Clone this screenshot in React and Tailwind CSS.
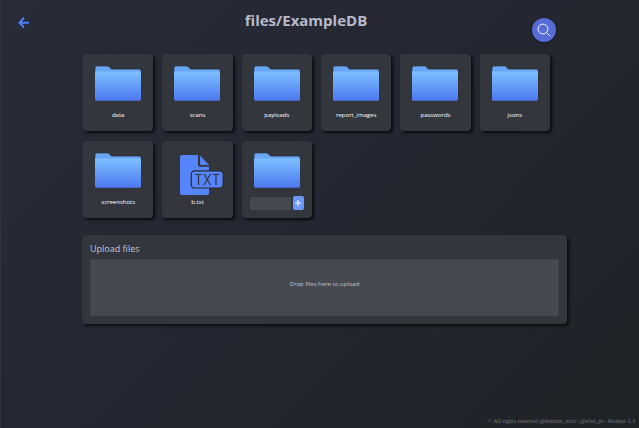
const FOLDERS = ["data", "scans", "payloads", "report_images", "passwords", "jsons", "screenshots"];

function FolderIcon() {
  return (
    <svg viewBox="0 0 46 36" className="h-9 w-[46px]" aria-hidden>
      <defs>
        <linearGradient id="folder-front" x1="0" y1="0" x2="0" y2="1">
          <stop offset="0" stopColor="#7cc0ff" />
          <stop offset="1" stopColor="#4d78f0" />
        </linearGradient>
      </defs>
      <path d="M0 34V2C0 .8.800 0 2 0H12c1.200 0 1.800.300 2.500 1L16.500 3h27.800c1 0 1.700.700 1.700 1.700v5H0z" fill="#68a5f5" stroke="#211d1a" strokeWidth=".6" />
      <path d="M0 5.500h46v27.500c0 1.200-.8 1.800-1.800 1.800H1.800C.8 34.800 0 34.200 0 33z" fill="url(#folder-front)" />
    </svg>
  );
}

function TxtIcon() {
  return (
    <svg viewBox="0 0 44 40" className="h-10 w-11" aria-hidden>
      <path d="M2 0h16v9.500c0 1.400.9 2.300 2.300 2.300H29V38c0 1.200-.8 2-2 2H2c-1.200 0-2-.8-2-2V2C0 .8.800 0 2 0z" fill="#5584fb" />
      <path d="M20 .5 29 10h-7.500c-1 0-1.500-.5-1.500-1.500z" fill="#5584fb" />
      <rect x="11.200" y="15.800" width="32" height="17.200" rx="3.500" fill="#5584fb" stroke="#292a2c" strokeWidth="1.200" />
      <path d="M15 19.500h7M18.500 19.500v10.500M24 19l6.500 11M30.500 19l-6.500 11M32.500 19.500h7M36 19.500v10.500" fill="none" stroke="#30343d" strokeWidth="1.200" />
    </svg>
  );
}

function Card({ children }) {
  return (
    <div className="flex h-[77px] flex-col items-center rounded-sm bg-[#33363d] pt-3 shadow-[2px_2px_3px_#0b0c0f]">
      {children}
    </div>
  );
}

function App() {
  return (
    <div className="flex min-h-screen flex-col border-l border-[#30333d] bg-linear-135 from-[#282c38] via-[#242731] to-[#1f2226] font-['Open_Sans','Noto_Sans',sans-serif] text-white">
      <header className="flex items-start pr-[83px] pl-[17px]">
        <a href="#back" aria-label="Back" className="mt-[17px]">
          <svg viewBox="0 0 12 12" className="h-3 w-3" fill="none" stroke="#4f7ffa" strokeWidth="2" aria-hidden>
            <path d="M6 .8 1.500 5.700l4.500 4.900M1.500 5.700H11" />
          </svg>
        </a>
        <h1 className="mt-[9px] flex-1 pl-[50px] text-center text-[15px] leading-[22px] font-bold text-[#b9b9cb]">
          files/ExampleDB
        </h1>
        <button
          type="button"
          aria-label="Search"
          className="mt-[18px] flex h-6 w-6 items-center justify-center rounded-full bg-[#566bd6] shadow-[0_1px_3px_#15171c]"
        >
          <svg viewBox="0 0 14 14" className="h-[14px] w-[14px]" fill="none" stroke="#f2f4ff" strokeWidth="1" aria-hidden>
            <circle cx="6" cy="6" r="4.900" />
            <path d="m9.500 9.500 3.700 3.700" />
          </svg>
        </button>
      </header>

      <main className="mt-3 pr-[72px] pl-[81px]">
        <div className="grid grid-cols-6 gap-x-[9px] gap-y-[10px] pr-[17px] pl-px">
          {FOLDERS.map((name) => (
            <Card key={name}>
              <FolderIcon />
              <p className="mt-2 text-[6px] leading-[10px] font-medium">{name}</p>
            </Card>
          ))}
          <Card>
            <div className="mt-[2px] ml-[10px]">
              <TxtIcon />
            </div>
            <p className="mt-[2px] text-[6px] leading-[10px] font-medium">b.txt</p>
          </Card>
          <Card>
            <FolderIcon />
            <form className="mt-[7px] flex items-center gap-[2px]" onSubmit={(e) => e.preventDefault()}>
              <input
                type="text"
                aria-label="New folder name"
                className="h-[13px] w-[41px] rounded-[1px] bg-[#45484f] px-1 text-[6px] outline-none"
              />
              <button
                type="submit"
                aria-label="Create folder"
                className="flex h-[14px] w-[11px] items-center justify-center rounded-[2px] bg-[#6c98fb]"
              >
                <svg viewBox="0 0 6 6" className="h-[6px] w-[6px]" stroke="#f0f4ff" strokeWidth="1.200" aria-hidden>
                  <path d="M3 0v6M0 3h6" />
                </svg>
              </button>
            </form>
          </Card>
        </div>

        <section className="mt-[17px] rounded-sm bg-[#33363d] px-2 pt-2 pb-2 shadow-[2px_2px_3px_#0b0c0f]">
          <h2 className="text-[9px] leading-3 font-medium text-[#c3c3d3]">Upload files</h2>
          <button
            type="button"
            className="mt-1 block h-[57px] w-full border border-[#40434a] bg-[#464950] pb-[6px] text-[6px] text-[#c3c4cb]"
          >
            Drop files here to upload
          </button>
        </section>
      </main>

      <footer className="mt-auto pr-1 pb-[2px] text-right font-['Liberation_Serif',serif] text-[6px] leading-[10px] text-[#77787c]">
        © All rights reserved @dandan_arad | @elad_pt - Redeye 1.3
      </footer>
    </div>
  );
}

export default App;
